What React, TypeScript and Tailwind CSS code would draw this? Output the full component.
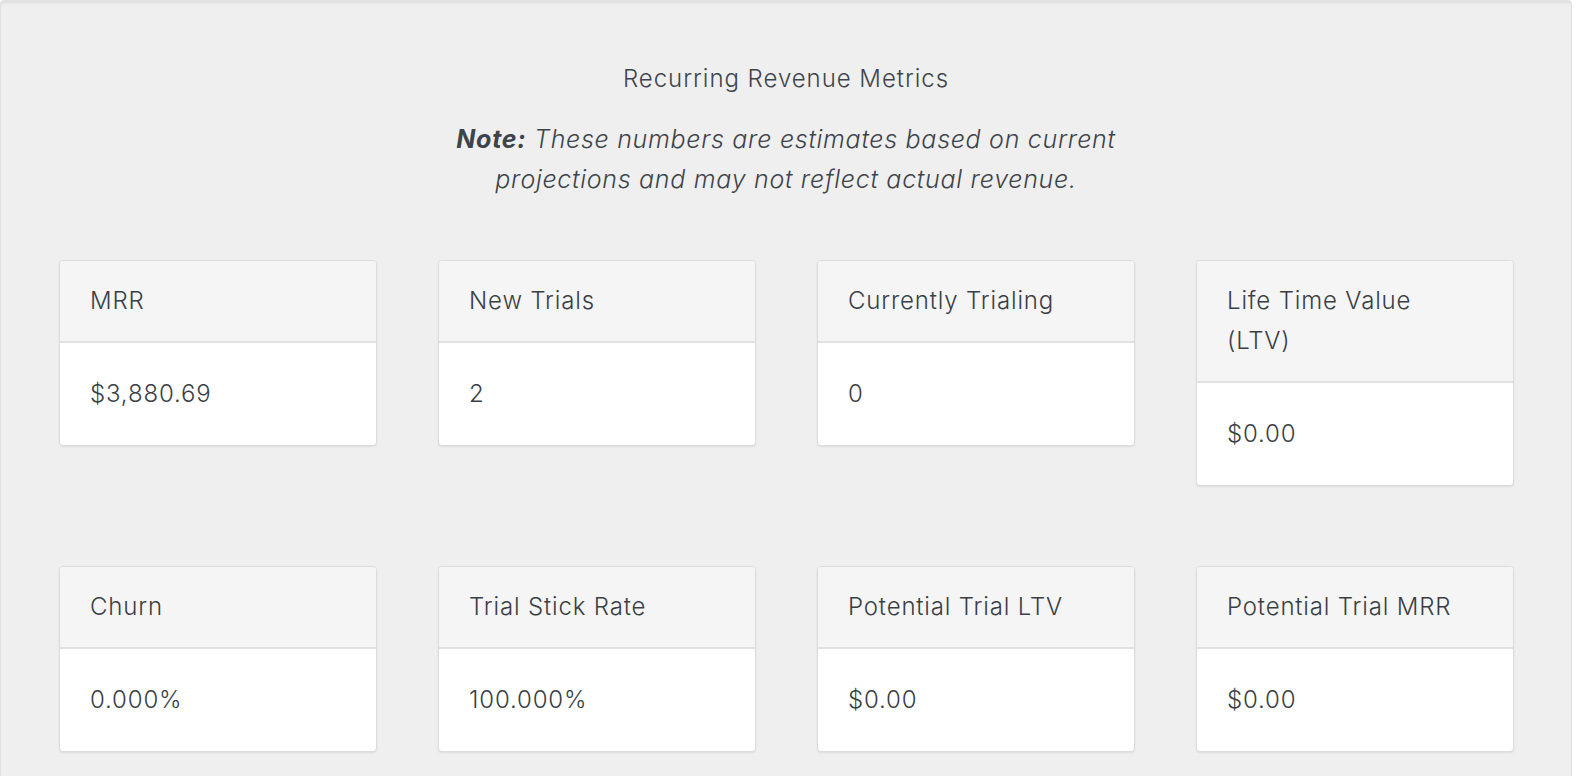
const metrics = [
  { label: "MRR", value: "$3,880.69" },
  { label: "New Trials", value: "2" },
  { label: "Currently Trialing", value: "0" },
  { label: "Life Time Value (LTV)", value: "$0.00" },
  { label: "Churn", value: "0.000%" },
  { label: "Trial Stick Rate", value: "100.000%" },
  { label: "Potential Trial LTV", value: "$0.00" },
  { label: "Potential Trial MRR", value: "$0.00" },
]

function MetricCard({ label, value }: { label: string; value: string }) {
  return (
    <div className="rounded-[4px] border border-[#dcdcdc] bg-white shadow-[0_1px_2px_rgba(0,0,0,0.08)] overflow-hidden">
      <div className="bg-[#f5f5f5] border-b-2 border-[#e1e1e1] pl-[30px] pr-[40px] py-[20px] text-[24px] leading-[40px] tracking-[0.035em] text-[#3a3f45]">
        {label}
      </div>
      <div className="px-[30px] py-[31px] text-[24px] leading-[40px] tracking-[0.035em] text-[#3a3f45]">
        {value}
      </div>
    </div>
  )
}

export default function App() {
  return (
    <div className="min-h-screen bg-white font-['Inter',sans-serif] font-light">
      <div className="w-[1572px] min-h-[776px] rounded-[4px] border border-[#e2e2e2] border-t-[3px] bg-[#efefef] pt-[56px] pb-10 shadow-[inset_0_1px_2px_rgba(0,0,0,0.04)]">
        <h2 className="text-center text-[24px] leading-[40px] tracking-[0.04em] text-[#3e444b]">
          Recurring Revenue Metrics
        </h2>
        <p className="mx-auto mt-[20px] max-w-[700px] text-center text-[25px] leading-[40px] tracking-[0.028em] italic text-[#3e444b]">
          <strong className="font-bold">Note:</strong> These numbers are estimates based on current
          projections and may not reflect actual revenue.
        </p>
        <div className="mt-[61px] grid grid-cols-[repeat(4,318px)] items-start gap-x-[61px] gap-y-[80px] pl-[58px]">
          {metrics.map((m) => (
            <MetricCard key={m.label} label={m.label} value={m.value} />
          ))}
        </div>
      </div>
    </div>
  )
}
